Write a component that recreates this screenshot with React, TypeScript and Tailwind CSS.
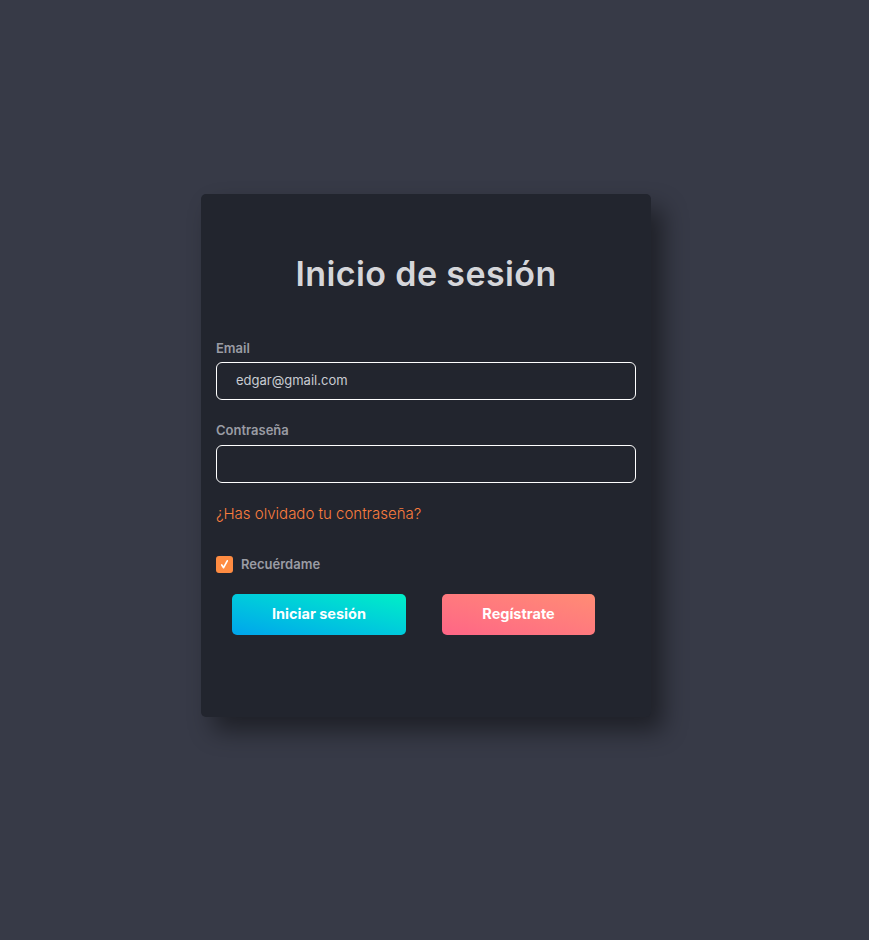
export default function App() {
  return (
    <div
      className="min-h-screen w-full bg-[#373a47] flex justify-center pr-[17px] pt-[194px]"
      style={{ fontFamily: 'Inter, "Noto Sans", sans-serif' }}
    >
      <div className="w-[450px] h-[523px] bg-[#22252e] rounded-[5px] shadow-[12px_14px_24px_rgba(0,0,0,0.45)] px-[15px] pt-[57px]">
        <h1 className="text-center text-[34px] font-semibold text-[#d5d6da] tracking-[0.4px] leading-[46px]">
          Inicio de sesión
        </h1>

        <div className="mt-[43px]">
          <label className="block text-[13px] font-semibold text-[#9a9ca4] leading-[16px]">
            Email
          </label>
          <div className="mt-[6px] h-[38px] border border-white rounded-[6px] flex items-center pl-[19px] text-[13px] text-[#c9ccd2]">
            edgar@gmail.com
          </div>
        </div>

        <div className="mt-[22px]">
          <label className="block text-[13px] font-semibold text-[#9a9ca4] leading-[16px]">
            Contraseña
          </label>
          <div className="mt-[7px] h-[38px] border border-white rounded-[6px]" />
        </div>

        <a className="block mt-[21px] text-[15px] font-light text-[#fa7d3e] leading-[20px]">
          ¿Has olvidado tu contraseña?
        </a>

        <div className="mt-[31px] flex items-center gap-[8px]">
          <div className="w-[17px] h-[17px] rounded-[3px] bg-[#ff8c42] flex items-center justify-center">
            <svg width="11" height="11" viewBox="0 0 12 12" fill="none">
              <path d="M3 6.5 L5 9.5 L9 2" stroke="white" strokeWidth="1.8" strokeLinecap="round" strokeLinejoin="round" />
            </svg>
          </div>
          <span className="text-[13px] font-semibold text-[#9a9ca4]">Recuérdame</span>
        </div>

        <div className="mt-[19px] flex pl-[16px] gap-[36px]">
          <button className="w-[174px] h-[41px] rounded-[5px] bg-linear-to-tr from-[#00a4ec] to-[#00efc6] text-white text-[14.5px] font-bold">
            Iniciar sesión
          </button>
          <button className="w-[153px] h-[41px] rounded-[5px] bg-linear-to-tr from-[#ff6586] to-[#ff8c74] text-white text-[14.5px] font-bold">
            Regístrate
          </button>
        </div>
      </div>
    </div>
  );
}
